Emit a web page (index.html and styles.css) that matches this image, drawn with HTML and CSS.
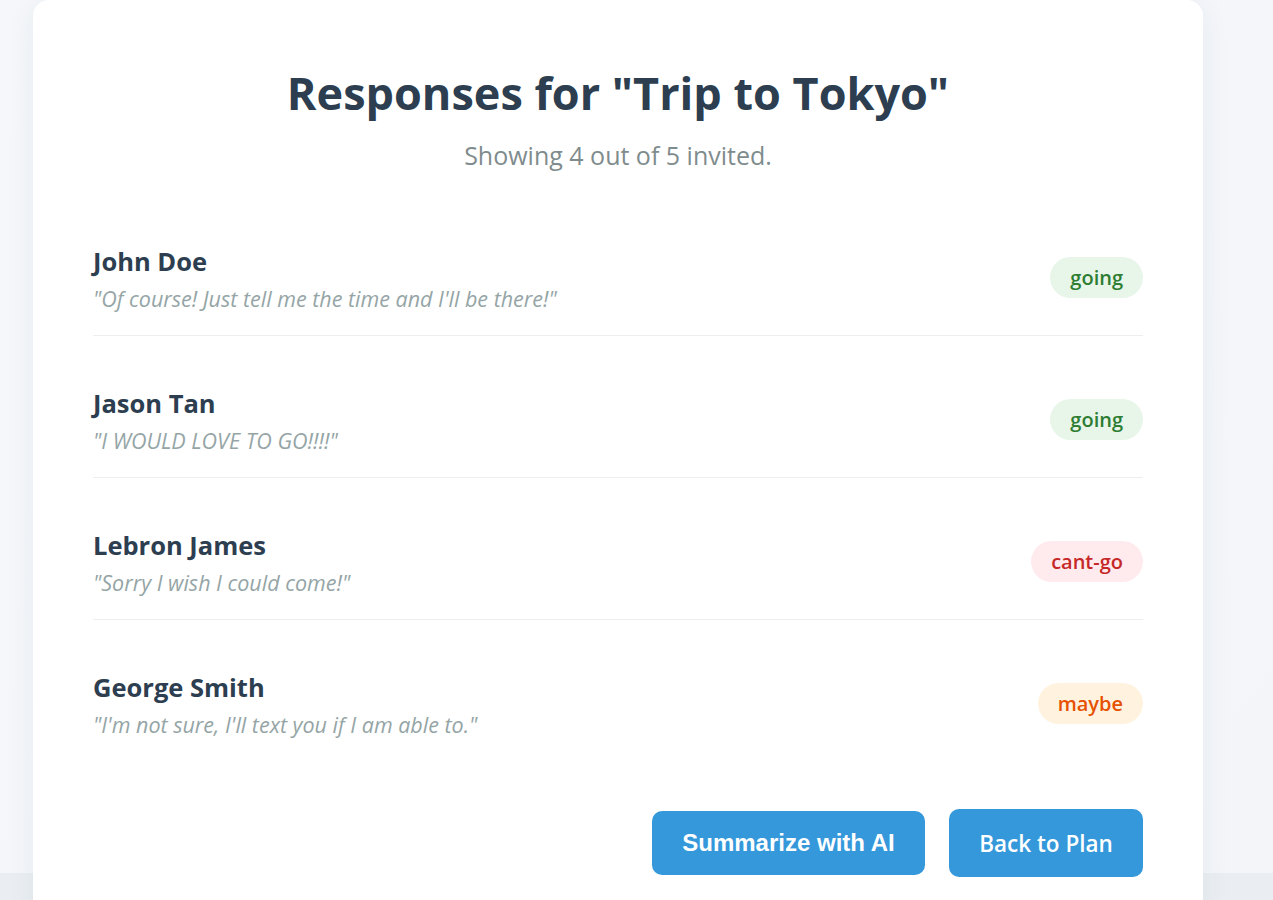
FILE: index.html
```html
<!DOCTYPE html>
<html lang="en">
<head>
<meta charset="utf-8">
<title>Responses</title>
<link rel="stylesheet" href="styles.css">
</head>
<body>
<div class="page">
  <main class="card">
    <h1 class="title">Responses for "Trip to Tokyo"</h1>
    <p class="subtitle">Showing 4 out of 5 invited.</p>
    <ul class="list">
      <li class="row">
        <div class="info">
          <div class="name">John Doe</div>
          <div class="quote">"Of course! Just tell me the time and I'll be there!"</div>
        </div>
        <span class="badge going">going</span>
      </li>
      <li class="row">
        <div class="info">
          <div class="name">Jason Tan</div>
          <div class="quote">"I WOULD LOVE TO GO!!!!"</div>
        </div>
        <span class="badge going">going</span>
      </li>
      <li class="row">
        <div class="info">
          <div class="name">Lebron James</div>
          <div class="quote">"Sorry I wish I could come!"</div>
        </div>
        <span class="badge cant">cant-go</span>
      </li>
      <li class="row">
        <div class="info">
          <div class="name">George Smith</div>
          <div class="quote">"I'm not sure, I'll text you if I am able to."</div>
        </div>
        <span class="badge maybe">maybe</span>
      </li>
    </ul>
    <div class="actions">
      <button class="btn btn-ai">Summarize with AI</button>
      <button class="btn btn-back">Back to Plan</button>
    </div>
  </main>
</div>
</body>
</html>
```

FILE: styles.css
```css
html {
  background: #eaeef2;
}
body {
  margin: 0;
  font-family: "Open Sans", "Noto Sans", sans-serif;
}
.page {
  display: flow-root;
  background:
    linear-gradient(to bottom, transparent 0, transparent 873px, #eaeef2 873px),
    linear-gradient(135deg, #f5f7fa 0%, #f3f5f9 100%);
}
.card {
  margin-left: 33px;
  width: 1170px;
  box-sizing: border-box;
  background: #fff;
  border-radius: 16px;
  padding: 64px 60px 60px;
  box-shadow: 0 4px 30px rgba(40, 60, 90, 0.06);
}
.title {
  margin: 0;
  text-align: center;
  color: #2c3e50;
  font-size: 45px;
  font-weight: 700;
  line-height: 58px;
}
.subtitle {
  margin: 16px 0 0;
  text-align: center;
  color: #7f8c8d;
  font-size: 25px;
  line-height: 34px;
}
.list {
  list-style: none;
  margin: 22px 0 0;
  padding: 0;
}
.row {
  display: flex;
  align-items: center;
  justify-content: space-between;
  padding: 50px 0 21px;
  border-bottom: 1px solid #eeeeee;
}
.row:last-child {
  border-bottom: none;
}
.name {
  color: #2c3e50;
  font-size: 25.5px;
  font-weight: 700;
  line-height: 34px;
}
.quote {
  margin-top: 6px;
  color: #95a5a6;
  font-size: 21.5px;
  font-style: italic;
  line-height: 30px;
}
.badge {
  display: inline-block;
  padding: 0 20px;
  height: 41px;
  line-height: 41px;
  border-radius: 21px;
  font-size: 20px;
  font-weight: 600;
  margin-bottom: 3px;
}
.going {
  background: #e8f5e9;
  color: #2e7d32;
}
.cant {
  background: #ffebee;
  color: #c62828;
}
.maybe {
  background: #fff3e0;
  color: #e65100;
}
.actions {
  display: flex;
  justify-content: flex-end;
  align-items: center;
  gap: 24px;
  margin-top: 48px;
}
.btn {
  border: none;
  background: #3498db;
  color: #fff;
  border-radius: 10px;
  cursor: pointer;
  padding: 0;
}
.btn-ai {
  font-family: "Liberation Sans", Arial, sans-serif;
  font-weight: 700;
  font-size: 24px;
  width: 273px;
  height: 64px;
}
.btn-back {
  font-family: "Open Sans", sans-serif;
  font-weight: 600;
  font-size: 22.5px;
  width: 194px;
  height: 68px;
}
```
